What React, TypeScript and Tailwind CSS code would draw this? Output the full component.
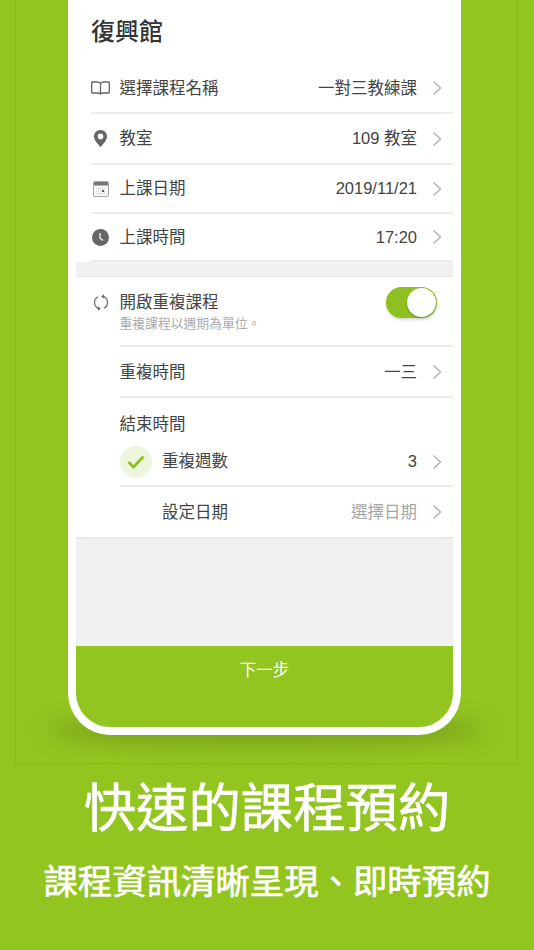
import { ReactNode } from "react";

const fontStack = "font-['Liberation_Sans','Noto_Sans_CJK_TC',sans-serif]";

function Chevron() {
  return (
    <svg width="10" height="16" viewBox="0 0 10 16" fill="none" className="shrink-0">
      <path d="M1.5 1.5L8.5 8L1.5 14.5" stroke="#b4b4b8" strokeWidth="1.5" />
    </svg>
  );
}

function BookIcon() {
  return (
    <svg width="19" height="14" viewBox="0 0 19 14" fill="none">
      <path
        d="M9.5 2.6C8.6 1.5 7.4 1 6 1H1.2C.9 1 .7 1.2 .7 1.5V11.5C.7 11.8 .9 12 1.2 12H7.5C8.6 12 9.1 12.4 9.5 13C9.9 12.4 10.4 12 11.5 12H17.8C18.1 12 18.3 11.8 18.3 11.5V1.5C18.3 1.2 18.1 1 17.8 1H13C11.6 1 10.4 1.5 9.5 2.6ZM9.5 2.6V13"
        stroke="#666"
        strokeWidth="1.3"
      />
    </svg>
  );
}

function PinIcon() {
  return (
    <svg width="13" height="17" viewBox="0 0 13 17">
      <path
        fillRule="evenodd"
        fill="#666"
        d="M6.5 0C2.9 0 0 2.8 0 6.4C0 10.6 4.6 14.6 6.5 17C8.4 14.6 13 10.6 13 6.4C13 2.8 10.1 0 6.5 0ZM6.5 3.6A2.8 2.8 0 1 1 6.5 9.2A2.8 2.8 0 1 1 6.5 3.6Z"
      />
    </svg>
  );
}

function CalendarIcon() {
  return (
    <svg width="16" height="16" viewBox="0 0 16 16">
      <rect x=".5" y=".5" width="15" height="15" rx="1.5" fill="#f7f7f7" stroke="#aaa" />
      <path d="M1 1.5A1 1 0 0 1 2 1H14A1 1 0 0 1 15 2V4.5H1Z" fill="#777" />
      <path d="M3 7.5H13M3 10H13M3 12.5H13" stroke="#ccc" strokeDasharray="1 1" />
      <rect x="9" y="9" width="2" height="2" fill="#555" />
    </svg>
  );
}

function ClockIcon() {
  return (
    <svg width="17" height="17" viewBox="0 0 17 17">
      <circle cx="8.5" cy="8.5" r="8.5" fill="#666" />
      <path d="M8 4V9.2L11 11.4" fill="none" stroke="#fff" strokeWidth="1.2" />
    </svg>
  );
}

function RepeatIcon() {
  return (
    <svg width="16" height="17" viewBox="0 0 16 17" fill="none">
      <path d="M10.4 2.4A6.6 6.6 0 0 1 11 14.3M5.6 14.6A6.6 6.6 0 0 1 5 2.7" stroke="#666" strokeWidth="1.2" />
      <path d="M8.2 2.4L11 .3V4.6ZM7.8 14.6L5 16.7V12.4Z" fill="#666" />
    </svg>
  );
}

function Row({
  icon,
  label,
  value,
  height,
}: {
  icon: ReactNode;
  label: string;
  value: string;
  height: string;
}) {
  return (
    <div className={`flex items-center pr-[11px] border-b-2 border-[#ececec] ${height}`}>
      <div className="w-[28.5px] flex items-center justify-start">{icon}</div>
      <span>{label}</span>
      <span className="ml-auto mr-[15px]">{value}</span>
      <Chevron />
    </div>
  );
}

export default function App() {
  return (
    <div className={`w-[534px] h-[950px] overflow-hidden bg-[#93c521] ${fontStack}`}>
      <div className="relative ml-[15px] w-[503px] h-[764px] border-x border-b border-[#9aa83e]">
        {/* soft shadow under the phone */}
        <div className="absolute left-[30px] top-[716px] w-[440px] h-[28px] rounded-[50%] bg-[#5d7a12] opacity-50 blur-[11px]" />

        <div className="relative ml-[52px] w-[393px] h-[735px] flex flex-col overflow-hidden rounded-b-[42px] border-x-8 border-b-8 border-white bg-white text-[16.5px] text-[#444]">
          <div className="h-[64px] pl-[15px] pt-[14px] text-[24px] leading-[36px] font-medium text-[#333]">復興館</div>

          <div className="pl-[15px] flex flex-col">
            <Row height="h-[50px]" icon={<BookIcon />} label="選擇課程名稱" value="一對三教練課" />
            <Row height="h-[51px]" icon={<div className="pl-[3px] flex"><PinIcon /></div>} label="教室" value="109 教室" />
            <Row height="h-[49px]" icon={<div className="pl-[2px] flex"><CalendarIcon /></div>} label="上課日期" value="2019/11/21" />
            <Row height="h-[48px]" icon={<div className="pl-[1px] flex"><ClockIcon /></div>} label="上課時間" value="17:20" />
          </div>

          <div className="h-[15px] bg-[#f1f1f1] border-b border-[#e6e6e6]" />

          <div className="pl-[15px]">
            <div className="h-[70px] flex">
              <div className="w-[28.5px] pt-[17px] pl-[2px]"><RepeatIcon /></div>
              <div className="flex flex-1 items-start justify-between border-b-2 border-[#ececec] pr-[16px]">
                <div className="pt-[13px]">
                  <div className="leading-[24px]">開啟重複課程</div>
                  <div className="text-[12.8px] leading-[20px] text-[#aaa]">重複課程以週期為單位。</div>
                </div>
                <div className="mt-[10px] w-[51px] h-[31px] rounded-full bg-[#8fc021] flex items-center justify-end pr-px shadow-[0_2px_3px_rgba(0,0,0,0.15)]">
                  <div className="w-[29px] h-[29px] rounded-full bg-white shadow-[0_1px_2px_rgba(0,0,0,0.3)]" />
                </div>
              </div>
            </div>

            <div className="ml-[28.5px]">
              <div className="h-[51px] flex items-center border-b-2 border-[#ececec] pr-[11px] pt-px">
                <span>重複時間</span>
                <span className="ml-auto mr-[15px]">一三</span>
                <Chevron />
              </div>
              <div className="h-[44px] pt-[14px] leading-[24px]">結束時間</div>
              <div className="h-[45px] flex items-center border-b-2 border-[#ececec] pr-[11px] pb-[4px]">
                <div className="w-[32px] h-[32px] mr-[10.5px] rounded-full bg-[#eff6de] flex items-center justify-center">
                  <svg width="18" height="14" viewBox="0 0 18 14" fill="none">
                    <path d="M1.5 7L6.5 12L16.5 1.5" stroke="#8fc021" strokeWidth="2.8" />
                  </svg>
                </div>
                <span>重複週數</span>
                <span className="ml-auto mr-[15px]">3</span>
                <Chevron />
              </div>
              <div className="h-[50px] flex items-center pl-[42.5px] pr-[11px]">
                <span>設定日期</span>
                <span className="ml-auto mr-[15px] text-[#a6a6a6]">選擇日期</span>
                <Chevron />
              </div>
            </div>
          </div>

          <div className="flex-1 bg-[#f1f1f1] border-t-2 border-[#e9e9e9]" />

          <div className="h-[81px] bg-[#93c521] text-center text-white pt-[11px] leading-[26px]">下一步</div>
        </div>
      </div>

      <div className="text-center text-white [-webkit-text-stroke:0.6px_white]">
        <div className="mt-[15px] text-[52.4px] leading-[60px]">快速的課程預約</div>
        <div className="mt-[21px] text-[34.4px] leading-[44px]">課程資訊清晰呈現、即時預約</div>
      </div>
    </div>
  );
}
